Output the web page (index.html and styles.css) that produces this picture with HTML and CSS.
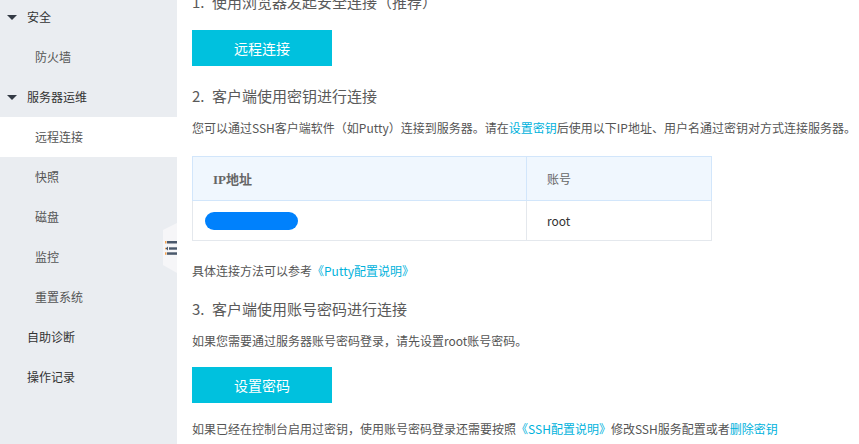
FILE: index.html
```html
<!DOCTYPE html>
<html lang="zh">
<head>
<meta charset="utf-8">
<link rel="stylesheet" href="styles.css">
</head>
<body>
<div class="page">
  <aside class="sidebar">
    <ul class="menu">
      <li class="group"><span class="caret"></span>安全</li>
      <li class="sub">防火墙</li>
      <li class="group"><span class="caret"></span>服务器运维</li>
      <li class="sub active">远程连接</li>
      <li class="sub">快照</li>
      <li class="sub">磁盘</li>
      <li class="sub">监控</li>
      <li class="sub">重置系统</li>
      <li class="top">自助诊断</li>
      <li class="top">操作记录</li>
    </ul>
    <div class="toggle">
      <svg width="12" height="15" viewBox="0 0 12 15">
        <rect x="0" y="1" width="1.5" height="2.5" fill="#f3a24e"/>
        <rect x="2" y="1" width="10" height="2.5" fill="#4a596c"/>
        <path d="M0.5 8.5 L3 6.5 L3 10.5 Z" fill="#4a596c"/>
        <rect x="0" y="7.7" width="1" height="1.6" fill="#f3a24e"/>
        <rect x="4" y="7.3" width="8" height="2.4" fill="#4a596c"/>
        <rect x="0" y="12.3" width="1.5" height="2.5" fill="#f3a24e"/>
        <rect x="2" y="12.3" width="10" height="2.5" fill="#4a596c"/>
      </svg>
    </div>
  </aside>
  <main class="content">
    <h3 class="heading first"><span class="num">1.</span>使用浏览器发起安全连接（推荐）</h3>
    <button class="btn">远程连接</button>
    <h3 class="heading h2"><span class="num">2.</span>客户端使用密钥进行连接</h3>
    <p class="text t1">您可以通过SSH客户端软件（如Putty）连接到服务器。请在<a class="link">设置密钥</a>后使用以下IP地址、用户名通过密钥对方式连接服务器。</p>
    <table class="info">
      <thead>
        <tr><th class="col-ip">IP地址</th><th class="col-user">账号</th></tr>
      </thead>
      <tbody>
        <tr><td><span class="redact"></span></td><td>root</td></tr>
      </tbody>
    </table>
    <p class="text t2">具体连接方法可以参考<a class="link">《Putty配置说明》</a></p>
    <h3 class="heading h3"><span class="num">3.</span>客户端使用账号密码进行连接</h3>
    <p class="text t3">如果您需要通过服务器账号密码登录，请先设置root账号密码。</p>
    <button class="btn btn2">设置密码</button>
    <p class="text t4">如果已经在控制台启用过密钥，使用账号密码登录还需要按照<a class="link">《SSH配置说明》</a>修改SSH服务配置或者<a class="link">删除密钥</a></p>
  </main>
</div>
</body>
</html>
```

FILE: styles.css
```css
* { box-sizing: border-box; }
html, body {
  margin: 0;
  padding: 0;
  background: #ffffff;
  font-family: "Noto Sans CJK SC", "Noto Sans", sans-serif;
  overflow: hidden;
}
.page {
  display: flex;
  height: 444px;
}
.sidebar {
  position: relative;
  width: 177px;
  flex: 0 0 177px;
  background: #eaedf1;
  height: 100%;
}
.menu {
  list-style: none;
  margin: -3px 0 0 0;
  padding: 0;
}
.menu li {
  height: 40px;
  line-height: 40px;
  font-size: 12px;
  white-space: nowrap;
}
.menu .group {
  color: #333333;
  padding-left: 7px;
  display: flex;
  align-items: center;
}
.caret {
  display: inline-block;
  width: 0;
  height: 0;
  border-left: 5px solid transparent;
  border-right: 5px solid transparent;
  border-top: 5px solid #333a44;
  margin-right: 10px;
}
.menu .sub {
  color: #555555;
  padding-left: 35px;
}
.menu .sub.active {
  background: #ffffff;
}
.menu .top {
  color: #333333;
  padding-left: 27px;
}
.toggle {
  position: absolute;
  right: 0;
  top: 223px;
  width: 14px;
  height: 50px;
  background: #f6f6f8;
  clip-path: polygon(100% 0, 100% 100%, 0 calc(100% - 8px), 0 7px);
  display: flex;
  align-items: center;
  justify-content: flex-end;
  padding-bottom: 2px;
}
.toggle svg { display: block; }
.content {
  flex: 1;
  padding-left: 15px;
  color: #555555;
}
.heading {
  margin: 0;
  font-size: 15px;
  font-weight: normal;
  line-height: 20px;
  color: #5a5a5a;
  white-space: nowrap;
}
.num {
  display: inline-block;
  width: 20px;
}
.heading.first { margin-top: -8px; }
.heading.h2 { margin-top: 20px; }
.heading.h3 { margin-top: 18px; }
.btn {
  display: block;
  width: 140px;
  height: 36px;
  margin-top: 18px;
  border: none;
  background: #00c1de;
  color: #ffffff;
  font-family: inherit;
  font-size: 14px;
  padding: 0;
  cursor: pointer;
}
.btn2 { margin-top: 16px; }
.text {
  margin: 0;
  font-size: 12px;
  line-height: 20px;
  color: #555555;
  white-space: nowrap;
}
.t1 { margin-top: 12px; }
.t2 { margin-top: 20px; }
.t3 { margin-top: 12px; }
.t4 { margin-top: 16px; }
.link {
  color: #00b2dc;
  text-decoration: none;
}
.info {
  margin-top: 18px;
  width: 520px;
  border-collapse: collapse;
  font-size: 12px;
}
.info th {
  height: 44px;
  background: #f0f7fe;
  border: 1px solid #d2e6fb;
  text-align: left;
  padding: 0 0 0 20px;
  color: #666666;
  font-weight: normal;
}
.info th.col-ip {
  width: 334px;
  font-weight: bold;
  font-family: "Liberation Serif", "Noto Sans CJK SC", serif;
  font-size: 13px;
}
.info td {
  height: 40px;
  border: 1px solid #e4e8ed;
  border-top: none;
  padding: 0 0 0 20px;
  color: #333333;
}
.info td:first-child { padding-left: 12px; }
.redact {
  display: inline-block;
  width: 93px;
  height: 18px;
  border-radius: 9px;
  background: #0081fc;
  vertical-align: middle;
  filter: blur(0.4px);
}
```
